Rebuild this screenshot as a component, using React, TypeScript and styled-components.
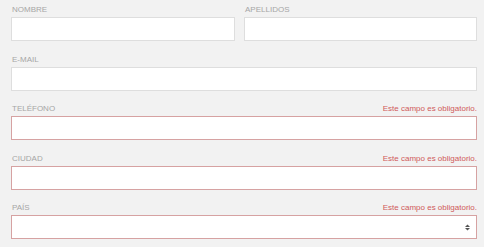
import React from "react";
import styled, { createGlobalStyle } from "styled-components";

const GlobalStyle = createGlobalStyle`
  html, body {
    margin: 0;
    padding: 0;
    background: #f2f2f2;
  }
  body {
    font-family: "Liberation Sans", Arial, sans-serif;
  }
`;

const Form = styled.form`
  width: 466px;
  padding: 5px 7px 0 11px;
  display: flex;
  flex-direction: column;
  row-gap: 13.5px;
`;

const Row = styled.div`
  display: grid;
  grid-template-columns: 224px 1fr;
  column-gap: 9px;
`;

const Field = styled.div`
  display: flex;
  flex-direction: column;
  row-gap: 2px;
`;

const LabelLine = styled.div`
  display: flex;
  justify-content: space-between;
  align-items: baseline;
  height: 10px;
  line-height: 10px;
  font-size: 8px;
`;

const Label = styled.label`
  color: #a6a6a6;
  text-transform: uppercase;
  padding-left: 1px;
`;

const ErrorText = styled.span`
  color: #d05a5a;
`;

const Input = styled.input<{ $error?: boolean }>`
  box-sizing: border-box;
  width: 100%;
  height: 24px;
  margin: 0;
  padding: 0 6px;
  background: #fff;
  border: 1px solid ${(p) => (p.$error ? "#d6a2a2" : "#dedede")};
  border-radius: 0;
  font: inherit;
  font-size: 9px;
  outline: none;
`;

const SelectBox = styled.div<{ $error?: boolean }>`
  box-sizing: border-box;
  height: 24px;
  display: flex;
  align-items: center;
  justify-content: flex-end;
  padding-right: 6px;
  background: #fff;
  border: 1px solid ${(p) => (p.$error ? "#d6a2a2" : "#dedede")};
`;

const ERROR = "Este campo es obligatorio.";

function Arrows() {
  return (
    <svg width="5" height="7" viewBox="0 0 5 7">
      <polygon points="0,3 5,3 2.5,0.5" fill="#555" />
      <polygon points="0,4 5,4 2.5,6.5" fill="#555" />
    </svg>
  );
}

export default function App() {
  return (
    <>
      <GlobalStyle />
      <Form>
        <Row>
          <Field>
            <LabelLine>
              <Label>Nombre</Label>
            </LabelLine>
            <Input />
          </Field>
          <Field>
            <LabelLine>
              <Label>Apellidos</Label>
            </LabelLine>
            <Input />
          </Field>
        </Row>
        <Field>
          <LabelLine>
            <Label>E-mail</Label>
          </LabelLine>
          <Input />
        </Field>
        <Field>
          <LabelLine>
            <Label>Teléfono</Label>
            <ErrorText>{ERROR}</ErrorText>
          </LabelLine>
          <Input $error />
        </Field>
        <Field>
          <LabelLine>
            <Label>Ciudad</Label>
            <ErrorText>{ERROR}</ErrorText>
          </LabelLine>
          <Input $error />
        </Field>
        <Field>
          <LabelLine>
            <Label>País</Label>
            <ErrorText>{ERROR}</ErrorText>
          </LabelLine>
          <SelectBox $error>
            <Arrows />
          </SelectBox>
        </Field>
      </Form>
    </>
  );
}
